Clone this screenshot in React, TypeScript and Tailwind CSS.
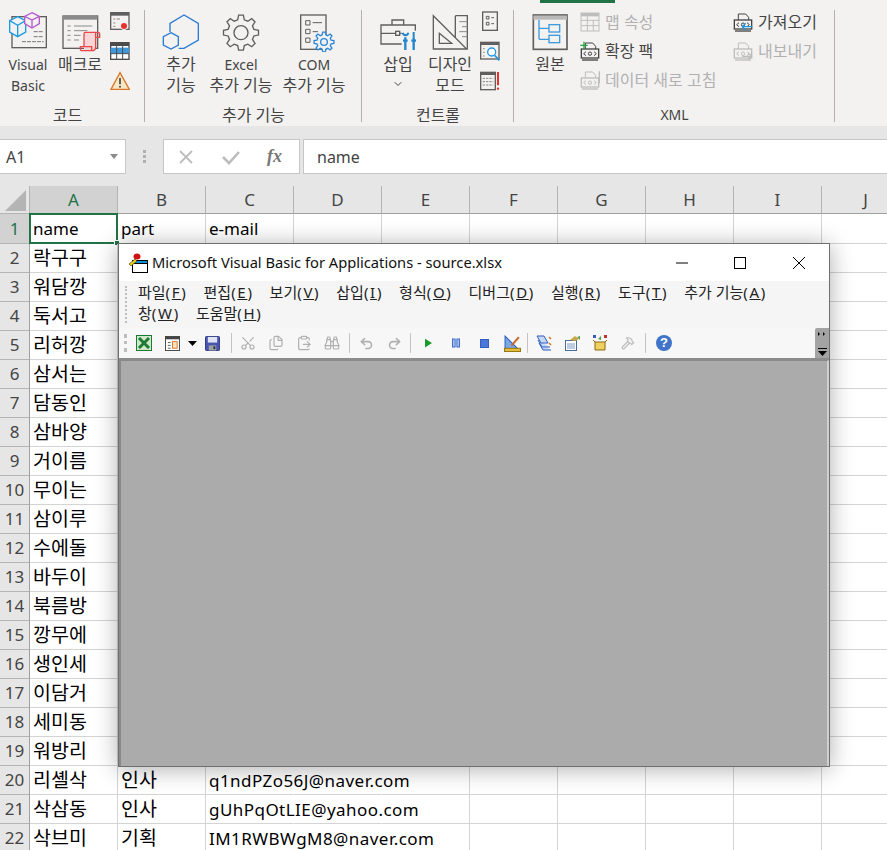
import React from 'react';
import { ChevronDown, Scissors, Files, ClipboardPaste, Binoculars, Undo2, Redo2, Hammer } from 'lucide-react';

const FONT = 'font-["Noto_Sans","Noto_Sans_CJK_KR",sans-serif]';

function gearPath(cx: number, cy: number, ro: number, ri: number, n: number) {
  const step = (Math.PI * 2) / n;
  const pts: string[] = [];
  for (let i = 0; i < n; i++) {
    const a = i * step - Math.PI / 2;
    [[ri, -0.32], [ro, -0.17], [ro, 0.17], [ri, 0.32]].forEach(([r, k]) => {
      pts.push(`${(cx + r * Math.cos(a + k * step)).toFixed(1)} ${(cy + r * Math.sin(a + k * step)).toFixed(1)}`);
    });
  }
  return 'M' + pts.join('L') + 'Z';
}

const DK = '#5f5f5f';
const BG = '#f3f2f1';

// big ribbon icons, drawn in 3x coords
function Big({ x, children }: { x: number; children: React.ReactNode }) {
  return (
    <svg viewBox={`${x} 24 132 132`} className="w-[44px] h-[44px]" fill="none" strokeWidth={4}>
      {children}
    </svg>
  );
}

function Small({ vb, children }: { vb: string; children: React.ReactNode }) {
  return (
    <svg viewBox={vb} className="w-[20px] h-[20px] shrink-0" fill="none" strokeWidth={4}>
      {children}
    </svg>
  );
}

const VbIcon = () => (
  <Big x={17}>
    <rect x="35" y="50" width="103" height="93" stroke={DK} />
    <path d="M100 95h30M100 110h30M65 125h65" stroke="#777" strokeWidth={3} strokeDasharray="12 3" />
    <path d="M52 50L76 62V96L52 110L28 96V62Z" fill={BG} stroke="#1b9be0" />
    <path d="M28 62L52 76L76 62M52 76V110" stroke="#1b9be0" />
    <path d="M95 38L117 49V71L95 84L73 71V49Z" fill={BG} stroke="#b45bcb" />
    <path d="M73 49L95 60L117 49M95 60V84" stroke="#b45bcb" />
  </Big>
);

const MacroIcon = () => (
  <Big x={177}>
    <rect x="192" y="48" width="104" height="97" stroke={DK} />
    <rect x="192" y="48" width="104" height="11" fill="#8a8a8a" />
    <path d="M205 78h10M225 78h55M205 92h10M225 92h40M205 106h10M225 106h20M205 120h10M225 120h15" stroke="#8a8a8a" strokeWidth={3} />
    <path d="M255 98H290V150H255Z" fill="#f9d5d5" />
    <path d="M255 140V102Q255 97 260 97H297Q302 97 302 102V112H290M290 97V140Q290 152 278 152H250Q244 152 244 146V140H278V150" stroke="#e8484a" />
  </Big>
);

const HexIcon = () => (
  <Big x={477}>
    <path d="M510 96V70L552 45L595 70V120L552 145H536" stroke="#2b7cd3" />
    <path d="M513 98L535 110V135L513 147L490 135V110Z" stroke="#2b7cd3" />
  </Big>
);

const GearIcon = () => (
  <Big x={660}>
    <path d={gearPath(726, 98, 53, 40, 8)} stroke={DK} />
    <circle cx="726" cy="98" r="21" stroke={DK} />
  </Big>
);

const ComIcon = () => (
  <Big x={876}>
    <rect x="902" y="45" width="76" height="103" stroke={DK} />
    <path d="M917 62h13v13h-13zM917 88h13v13h-13zM917 114h13v13h-13z" stroke={DK} strokeWidth={3} />
    <path d="M938 68h28M938 95h16" stroke={DK} strokeWidth={3} />
    <path d={gearPath(972, 126, 30, 22, 8)} fill={BG} stroke="#2b86d9" />
    <circle cx="972" cy="126" r="10" stroke="#2b86d9" />
  </Big>
);

const ToolboxIcon = () => (
  <Big x={47}>
    <path d="M62 75H165V132H62ZM95 75V60H130V75M62 100H106M118 100H165" stroke={DK} />
    <rect x="106" y="94" width="12" height="12" stroke={DK} />
    <rect x="124" y="92" width="52" height="64" fill={BG} />
    <path d="M135 112V150M160 112V150M128 122H142M153 122H167" stroke="#1f86cf" strokeWidth={7} />
    <path d="M127 98a9 11 0 0 0 17 0M160 96V112" stroke="#1f86cf" strokeWidth={6} />
  </Big>
);

const RulerIcon = () => (
  <Big x={201}>
    <path d="M217 47L317 147H217Z" stroke={DK} />
    <path d="M235 100L272 130H235Z" stroke={DK} />
    <path d="M283 47H319V147M283 47V112" stroke={DK} />
    <path d="M295 65h24M303 80h16M295 95h24M303 110h16" stroke="#8a8a8a" strokeWidth={3} />
  </Big>
);

const SourceIcon = () => (
  <Big x={499}>
    <rect x="515" y="45" width="101" height="103" stroke={DK} strokeWidth={5} />
    <rect x="515" y="47" width="101" height="12" fill="#b9b9b9" />
    <rect x="562" y="74" width="32" height="22" stroke="#3d9be0" />
    <rect x="562" y="106" width="32" height="22" stroke="#3d9be0" />
    <path d="M532 60V118M532 85H562M532 118H562" stroke="#3d9be0" />
  </Big>
);

function RecordIcon() {
  return (
    <Small vb="334 40 60 60">
      <rect x="336" y="45" width="55" height="50" stroke={DK} />
      <rect x="336" y="44" width="55" height="10" fill={DK} />
      <path d="M344 64h6M354 64h10M344 76h6M344 86h6" stroke="#888" strokeWidth={3} />
      <circle cx="376" cy="84" r="13" fill={BG} />
      <circle cx="376" cy="85" r="9" fill="#e8312f" />
    </Small>
  );
}

function TableIcon() {
  return (
    <Small vb="334 132 60 60">
      <rect x="336" y="137" width="55" height="50" fill="#fff" stroke="#4b4b4b" />
      <rect x="336" y="137" width="55" height="10" fill="#4b4b4b" />
      <rect x="336" y="152" width="55" height="18" fill="#3f97dc" />
      <path d="M354 137V187M372 137V187M336 170H391" stroke="#4b4b4b" strokeWidth={3} />
    </Small>
  );
}

function WarnIcon() {
  return (
    <Small vb="332 222 60 60">
      <path d="M362 227L390 277H335Z" fill="#f7e9c6" stroke="#d9782b" />
      <path d="M362 243V262" stroke="#444" strokeWidth={5} />
      <circle cx="362" cy="269" r="3" fill="#444" />
    </Small>
  );
}

function PropsDocIcon() {
  return (
    <Small vb="358 42 60 60">
      <rect x="366" y="45" width="44" height="55" stroke={DK} />
      <path d="M377 58h8v8h-8zM377 76h8v8h-8z" stroke={DK} strokeWidth={3} />
      <path d="M392 62h8M392 80h8" stroke={DK} strokeWidth={3} />
    </Small>
  );
}

function CodeViewIcon() {
  return (
    <Small vb="357 132 60 60">
      <rect x="359" y="136" width="55" height="50" stroke={DK} />
      <rect x="359" y="135" width="55" height="9" fill={DK} />
      <path d="M366 155h5M366 166h5M366 177h5" stroke="#888" strokeWidth={3} />
      <circle cx="392" cy="165" r="12" fill="#fff" stroke="#2196e3" />
      <path d="M401 175L415 190" stroke="#2196e3" strokeWidth={5} />
    </Small>
  );
}

function RunDialogIcon() {
  return (
    <Small vb="357 221 60 60">
      <rect x="359" y="225" width="44" height="52" stroke={DK} />
      <rect x="359" y="224" width="44" height="9" fill={DK} />
      <path d="M365 243h32M365 253h32M365 263h32" stroke="#888" strokeWidth={3} strokeDasharray="7 3" />
      <path d="M411 224V264" stroke="#e8312f" strokeWidth={6} />
      <circle cx="411" cy="274" r="3.5" fill="#e8312f" />
    </Small>
  );
}

function MapIcon() {
  return (
    <Small vb="0 0 60 60">
      <rect x="3" y="3" width="54" height="54" stroke="#bdbdbd" strokeWidth={3} />
      <rect x="3" y="3" width="54" height="10" fill="#bdbdbd" />
      <path d="M3 25H57M3 41H57M22 13V57M40 25V57" stroke="#bdbdbd" strokeWidth={3} />
    </Small>
  );
}

function XmlIcon({ color, children }: { color: string; children?: React.ReactNode }) {
  return (
    <Small vb="0 0 60 60">
      <path d="M16 24V6H38L47 16V24" stroke={color} strokeWidth={3} />
      <rect x="4" y="24" width="52" height="27" stroke={color} />
      <path d="M18 32L11 38L18 44M42 32L49 38L42 44" stroke={color} strokeWidth={3} />
      <circle cx="30" cy="38" r="5" stroke={color} strokeWidth={3} />
      <path d="M6 57H54" stroke={color} />
      {children}
    </Small>
  );
}

const isKo = (s: React.ReactNode) => typeof s === 'string' && /[가-힣]/.test(s);

function BigBtn({ icon, lines, cls }: { icon: React.ReactNode; lines: React.ReactNode[]; cls: string }) {
  return (
    <div className={`flex flex-col items-center pt-[8px] ${cls}`}>
      {icon}
      <div className="mt-[2px] flex flex-col items-center leading-[21px] text-[#444] whitespace-nowrap">
        {lines.map((l, i) => (
          <div key={i} className={`h-[21px] ${isKo(l) ? 'text-[16px]' : 'text-[14px]'}`}>{l}</div>
        ))}
      </div>
    </div>
  );
}

function Group({ w, label, labelCls = '', children }: { w: string; label: string; labelCls?: string; children: React.ReactNode }) {
  return (
    <div className={`${w} h-full flex flex-col shrink-0 relative`}>
      <div className="flex h-[104px]">{children}</div>
      <div className={`text-center leading-[22px] text-[#444] ${isKo(label) ? 'text-[16px]' : 'text-[14px]'} ${labelCls}`}>{label}</div>
      <div className="absolute right-0 top-[10px] bottom-[4px] w-px bg-[#b3b0ad]" />
    </div>
  );
}

function XmlRow({ icon, text, off }: { icon: React.ReactNode; text: string; off?: boolean }) {
  return (
    <div className={`flex items-center gap-[5px] h-[29px] text-[16px] whitespace-nowrap ${off ? 'text-[#b1b1b1]' : 'text-[#444]'}`}>
      {icon}
      <span>{text}</span>
    </div>
  );
}

function Ribbon() {
  return (
    <div className="h-[126px] flex bg-[#f3f2f1] shrink-0 relative">
      <div className="absolute left-[540px] top-0 w-[75px] h-[3px] bg-[#217346]" />
      <Group w="w-[145px]" label="코드" labelCls="pr-[10px]">
        <BigBtn cls="w-[56px]" icon={<VbIcon />} lines={['Visual', 'Basic']} />
        <BigBtn cls="w-[48px]" icon={<MacroIcon />} lines={['매크로']} />
        <div className="ml-[6px] w-[20px] flex flex-col gap-[10px] pt-[11px]">
          <RecordIcon />
          <TableIcon />
          <WarnIcon />
        </div>
      </Group>
      <Group w="w-[217px]" label="추가 기능">
        <BigBtn cls="w-[44px] ml-[14px]" icon={<HexIcon />} lines={['추가', '기능']} />
        <BigBtn cls="w-[64px] ml-[6px]" icon={<GearIcon />} lines={['Excel', '추가 기능']} />
        <BigBtn cls="w-[64px] ml-[9px]" icon={<ComIcon />} lines={['COM', '추가 기능']} />
      </Group>
      <Group w="w-[152px]" label="컨트롤">
        <BigBtn cls="w-[44px] ml-[14px]" icon={<ToolboxIcon />} lines={['삽입', <ChevronDown key="c" size={12} strokeWidth={2} className="mt-[3px]" />]} />
        <BigBtn cls="w-[44px] ml-[8px]" icon={<RulerIcon />} lines={['디자인', '모드']} />
        <div className="ml-[8px] w-[20px] flex flex-col gap-[10px] pt-[11px]">
          <PropsDocIcon />
          <CodeViewIcon />
          <RunDialogIcon />
        </div>
      </Group>
      <Group w="w-[321px]" label="XML">
        <BigBtn cls="w-[44px] ml-[14px]" icon={<SourceIcon />} lines={['원본']} />
        <div className="ml-[8px] w-[153px] flex flex-col pt-[7px]">
          <XmlRow off icon={<MapIcon />} text="맵 속성" />
          <XmlRow
            icon={
              <XmlIcon color="#444">
                <path d="M12 2V24M1 13H23" stroke="#2aa345" />
              </XmlIcon>
            }
            text="확장 팩"
          />
          <XmlRow
            off
            icon={
              <XmlIcon color="#bdbdbd">
                <path d="M58 4V40" stroke="#bdbdbd" />
              </XmlIcon>
            }
            text="데이터 새로 고침"
          />
        </div>
        <div className="w-[90px] flex flex-col pt-[7px]">
          <XmlRow
            icon={
              <XmlIcon color="#444">
                <path d="M58 44H28M38 34L28 44L38 54" stroke="#2196e3" />
              </XmlIcon>
            }
            text="가져오기"
          />
          <XmlRow
            off
            icon={
              <XmlIcon color="#bdbdbd">
                <path d="M28 46H56M46 36L56 46L46 56" stroke="#bdbdbd" />
              </XmlIcon>
            }
            text="내보내기"
          />
        </div>
      </Group>
    </div>
  );
}

function FormulaBar() {
  return (
    <div className="h-[60px] bg-[#e6e6e6] shrink-0 flex pt-[13px] text-[#444] items-start">
      <div className="w-[126px] h-[35px] bg-white border border-l-0 border-[#c6c6c6] flex items-center justify-between pl-[6px] pr-[7px] text-[16px]">
        A1
        <svg viewBox="0 0 8 5" className="w-[8px] h-[5px]"><path d="M0 0H8L4 5Z" fill="#8a8a8a" /></svg>
      </div>
      <div className="w-[37px] flex flex-col items-center gap-[2px] pt-[11px]">
        <span className="w-[3px] h-[3px] bg-[#b0b0b0]" />
        <span className="w-[3px] h-[3px] bg-[#b0b0b0]" />
        <span className="w-[3px] h-[3px] bg-[#b0b0b0]" />
      </div>
      <div className="w-[137px] h-[35px] bg-white border border-[#c6c6c6] flex items-center">
        <svg viewBox="0 0 16 16" className="w-[16px] h-[16px] ml-[14px]" fill="none" stroke="#bdbdbd" strokeWidth="1.8"><path d="M2 2L14 14M14 2L2 14" /></svg>
        <svg viewBox="0 0 18 16" className="w-[18px] h-[16px] ml-[28px]" fill="none" stroke="#bdbdbd" strokeWidth="2.6"><path d="M1 8L7 14L17 3" /></svg>
        <span className='ml-[27px] font-["Liberation_Serif",serif] italic font-bold text-[18px] text-[#777]'>fx</span>
      </div>
      <div className="ml-[3px] flex-1 h-[35px] bg-white border border-r-0 border-[#c6c6c6] flex items-center pl-[13px] text-[16px]">name</div>
    </div>
  );
}

const names = ['락구구', '워담깡', '둑서고', '리허깡', '삼서는', '담동인', '삼바양', '거이름', '무이는', '삼이루', '수에돌', '바두이', '북름방', '깡무에', '생인세', '이담거', '세미동', '워방리', '리셸삭', '삭삼동', '삭브미'];
const extra: Record<number, [string, string]> = {
  20: ['인사', 'q1ndPZo56J@naver.com'],
  21: ['인사', 'gUhPqOtLIE@yahoo.com'],
  22: ['기획', 'IM1RWBWgM8@naver.com'],
};
const cols = ['A', 'B', 'C', 'D', 'E', 'F', 'G', 'H', 'I', 'J'];

function Sheet() {
  const rows = [];
  for (let r = 1; r <= 22; r++) {
    const vals = r === 1 ? ['name', 'part', 'e-mail'] : [names[r - 2], extra[r]?.[0] ?? '', extra[r]?.[1] ?? ''];
    rows.push(
      <React.Fragment key={r}>
        <div className={`flex items-center justify-center text-[17px] border-r border-b border-r-[#9f9f9f] border-b-[#b4b4b4] ${r === 1 ? 'bg-[#d2d2d2] text-[#217346]' : 'bg-[#e6e6e6] text-[#444]'}`}>{r}</div>
        {cols.map((c, i) => {
          const v = vals[i] ?? '';
          const latin = r === 1 || i === 2;
          const email = r > 1 && i === 2;
          const spill = r >= 20 && (i === 2 || i === 3);
          return (
            <div
              key={c}
              className={`relative border-r border-b border-b-[#d4d4d4] pl-[3px] flex items-center whitespace-nowrap leading-none text-black ${spill ? 'border-r-transparent' : 'border-r-[#d4d4d4]'} ${latin ? 'text-[17px]' : 'text-[19.5px]'} ${email ? 'tracking-[0.45px]' : ''}`}
            >
              {v}
              {r === 1 && i === 0 && (
                <div className="absolute -left-px -top-px -right-px -bottom-px border-2 border-[#217346]">
                  <div className="absolute -right-[4px] -bottom-[4px] w-[6px] h-[6px] bg-[#217346] border border-white" />
                </div>
              )}
            </div>
          );
        })}
      </React.Fragment>
    );
  }
  return (
    <div className="grid grid-cols-[30px_repeat(10,88px)] grid-rows-[28px_30px] auto-rows-[29px] bg-white">
      <div className="bg-[#e6e6e6] border-r border-b border-[#b4b4b4] flex items-end justify-end">
        <svg viewBox="0 0 21 21" className="w-[21px] h-[21px] mr-[3px] mb-[2px]"><path d="M21 0V21H0Z" fill="#b4b4b4" /></svg>
      </div>
      {cols.map((c) => (
        <div key={c} className={`flex items-center justify-center text-[17px] border-b border-r border-b-[#9f9f9f] border-r-[#b4b4b4] ${c === 'A' ? 'bg-[#d2d2d2] text-[#217346]' : 'bg-[#e6e6e6] text-[#444]'}`}>{c}</div>
      ))}
      {rows}
    </div>
  );
}

function Sep({ cls }: { cls: string }) {
  return <div className={`w-px h-[20px] bg-[#c4c4c4] ${cls}`} />;
}

function Tool({ children }: { children: React.ReactNode }) {
  return <div className="w-[28px] h-[18px] flex items-center justify-center shrink-0">{children}</div>;
}

const GRAY = '#b0b0b0';

function VbaToolbar() {
  return (
    <div className="h-[32px] bg-[#f7f7f7] border-b-2 border-[#8c8c8c] flex items-center relative shrink-0">
      <div className="ml-[5px] w-0 h-[18px] border-l-[3px] border-dotted border-[#bdbdbd]" />
      <div className="ml-[3px] flex items-center">
        <Tool>
          <svg viewBox="0 0 16 16" className="w-[16px] h-[16px]">
            <rect x="0.5" y="0.5" width="15" height="15" fill="#cfe8c8" stroke="#1e7a34" />
            <path d="M3 3L13 13M13 3L3 13" stroke="#1e7a34" strokeWidth="3" />
          </svg>
        </Tool>
        <Tool>
          <svg viewBox="0 0 16 16" className="w-[15px] h-[15px]">
            <rect x="0.5" y="0.5" width="15" height="15" fill="#fff" stroke="#444" />
            <rect x="0.5" y="0.5" width="15" height="3" fill="#444" />
            <path d="M3 7h3M3 10h3M3 13h3" stroke="#555" />
            <rect x="8" y="6" width="5" height="7" fill="#fbe3c0" stroke="#d9782b" />
          </svg>
        </Tool>
        <div className="w-[12px] flex justify-center">
          <svg viewBox="0 0 9 5" className="w-[9px] h-[5px]"><path d="M0 0H9L4.5 5Z" fill="#000" /></svg>
        </div>
        <Tool>
          <svg viewBox="0 0 16 16" className="w-[15px] h-[15px]">
            <rect x="0.5" y="0.5" width="15" height="15" rx="1" fill="#4a55b0" stroke="#2c3580" />
            <rect x="3" y="1" width="10" height="6" fill="#dfe4f5" />
            <rect x="4" y="10" width="8" height="5.5" fill="#9aa0a8" />
            <rect x="9" y="11" width="2" height="3" fill="#333" />
          </svg>
        </Tool>
        <Sep cls="ml-[5px] mr-[2px]" />
        <Tool><Scissors size={16} color={GRAY} strokeWidth={1.8} className="-rotate-90" /></Tool>
        <Tool><Files size={16} color={GRAY} strokeWidth={1.8} /></Tool>
        <Tool><ClipboardPaste size={16} color={GRAY} strokeWidth={1.8} /></Tool>
        <Tool><Binoculars size={16} color={GRAY} strokeWidth={1.8} /></Tool>
        <Sep cls="ml-[3px] mr-[2px]" />
        <Tool><Undo2 size={15} color={GRAY} strokeWidth={2.6} /></Tool>
        <Tool><Redo2 size={15} color={GRAY} strokeWidth={2.6} /></Tool>
        <Sep cls="ml-[2px] mr-[3px]" />
        <Tool>
          <svg viewBox="0 0 8 10" className="w-[7px] h-[10px]"><path d="M0 0L8 5L0 10Z" fill="#1a9a28" /></svg>
        </Tool>
        <Tool>
          <svg viewBox="0 0 9 10" className="w-[8px] h-[10px]">
            <rect x="0.5" y="0.5" width="3" height="9" fill="#a9c4f0" stroke="#2f5fc0" />
            <rect x="5.5" y="0.5" width="3" height="9" fill="#a9c4f0" stroke="#2f5fc0" />
          </svg>
        </Tool>
        <Tool>
          <div className="w-[9px] h-[9px] bg-[#4a78d8] border border-[#2f5fc0]" />
        </Tool>
        <Tool>
          <svg viewBox="0 0 16 16" className="w-[17px] h-[17px]">
            <path d="M1 1L13 13H1Z" fill="#7aa8e8" stroke="#2f5fc0" />
            <rect x="0.5" y="12.5" width="15" height="3" fill="#e8c040" stroke="#9a7a10" />
            <path d="M7 10L14 2" stroke="#c86a30" strokeWidth="2" />
          </svg>
        </Tool>
        <Sep cls="ml-[1px] mr-[2px]" />
        <Tool>
          <svg viewBox="0 0 16 16" className="w-[16px] h-[16px]">
            <path d="M1 1H8L12 8H5ZM2 5L6 12H14M3 8L7 15H15" fill="#c8d8f4" stroke="#2f5fc0" />
            <path d="M13 2l2 2M13 8l2 2" stroke="#d9782b" strokeWidth="1.6" />
          </svg>
        </Tool>
        <Tool>
          <svg viewBox="0 0 16 16" className="w-[16px] h-[16px]">
            <rect x="1.5" y="5.5" width="11" height="10" fill="#fff" stroke="#4a6a98" />
            <path d="M3 9h8M3 11h8M3 13h8" stroke="#7a9ac8" />
            <path d="M6 5L11 1L15 4L11 6Z" fill="#c9a648" />
            <path d="M13 2L16 1V5Z" fill="#5aa04a" />
          </svg>
        </Tool>
        <Tool>
          <svg viewBox="0 0 16 16" className="w-[16px] h-[16px]">
            <path d="M3 7H13V15H3Z" fill="#f0d060" stroke="#8a6a10" />
            <path d="M3 7L1 5M13 7L15 5" stroke="#8a6a10" />
            <rect x="1" y="0" width="3" height="3" fill="#3a5ac0" />
            <path d="M6 4L9 1V5Z" fill="#4aa04a" />
            <rect x="12" y="0" width="3" height="3" fill="#c83030" />
          </svg>
        </Tool>
        <Tool><Hammer size={14} color="#bdbdbd" strokeWidth={2} /></Tool>
        <Sep cls="ml-[3px] mr-[4px]" />
        <Tool>
          <div className='w-[16px] h-[16px] rounded-full bg-[#3f74c8] text-white text-[13px] font-bold leading-[16px] text-center font-["Liberation_Sans",sans-serif]'>?</div>
        </Tool>
      </div>
      <div className="absolute right-0 top-0 bottom-0 w-[14px] bg-[#a3a3a3] rounded-tl-[2px] flex flex-col items-center justify-between pt-[4px] pb-[2px]">
        <svg viewBox="0 0 8 4" className="w-[8px] h-[4px]"><path d="M0 0L2 2L0 4ZM5 0L7 2L5 4Z" fill="#000" /></svg>
        <div className="flex flex-col items-center">
          <div className="w-[9px] h-px bg-black mb-[2px]" />
          <svg viewBox="0 0 9 5" className="w-[9px] h-[5px]"><path d="M0 0H9L4.5 5Z" fill="#000" /></svg>
        </div>
      </div>
    </div>
  );
}

const menus: [string, string][] = [
  ['파일', 'F'], ['편집', 'E'], ['보기', 'V'], ['삽입', 'I'], ['형식', 'O'], ['디버그', 'D'], ['실행', 'R'], ['도구', 'T'], ['추가 기능', 'A'], ['창', 'W'], ['도움말', 'H'],
];

function VbaWindow() {
  return (
    <div className="absolute left-[118px] top-[243px] w-[712px] h-[524px] bg-white border border-[#6f6f6f] shadow-[0_2px_22px_rgba(0,0,0,0.32)] flex flex-col">
      <div className="h-[37px] flex items-center shrink-0">
        <svg viewBox="0 0 20 20" className="w-[20px] h-[20px] ml-[10px]">
          <rect x="3.5" y="7.5" width="15" height="12" fill="#fff" stroke="#000" />
          <rect x="3.5" y="7.5" width="15" height="3" fill="#1090d0" stroke="#000" />
          <ellipse cx="8" cy="3.5" rx="3.5" ry="3" fill="#d01010" />
          <path d="M0 11L6 6L8 8L2 13Z" fill="#f0d000" stroke="#333" strokeWidth="0.6" />
        </svg>
        <span className="ml-[3px] text-[14.7px] text-[#111] whitespace-nowrap">Microsoft Visual Basic for Applications - source.xlsx</span>
        <svg viewBox="0 0 12 12" className="w-[12px] h-[12px] ml-auto"><path d="M0 6H12" stroke="#000" /></svg>
        <svg viewBox="0 0 12 12" className="w-[12px] h-[12px] ml-[46px]"><rect x="0.5" y="0.5" width="11" height="11" fill="none" stroke="#000" /></svg>
        <svg viewBox="0 0 12 12" className="w-[12px] h-[12px] ml-[47px] mr-[24px]"><path d="M0 0L12 12M12 0L0 12" stroke="#000" /></svg>
      </div>
      <div className="h-[47px] bg-[#f5f5f5] flex shrink-0">
        <div className="ml-[6px] mt-[5px] w-0 h-[37px] border-l-[2px] border-dotted border-[#bdbdbd]" />
        <div className="ml-[11px] pt-[1px] flex flex-wrap content-start gap-x-[16px] w-[680px] text-[15px] leading-[21px] text-[#222]">
          {menus.map(([t, k], i) => (
            <React.Fragment key={k}>
              <span>{t}<span className="tracking-[1.7px]">(<u>{k}</u>)</span></span>
              {i === 8 && <div className="w-full" />}
            </React.Fragment>
          ))}
        </div>
      </div>
      <VbaToolbar />
      <div className="flex-1 bg-[#ababab] border-l-2 border-t border-r-2 border-[#8a8a8a] border-r-[#d0d0d0]" />
    </div>
  );
}

export default function App() {
  return (
    <div className={`relative w-[887px] h-[850px] overflow-hidden flex flex-col bg-white ${FONT}`}>
      <Ribbon />
      <FormulaBar />
      <Sheet />
      <VbaWindow />
    </div>
  );
}
